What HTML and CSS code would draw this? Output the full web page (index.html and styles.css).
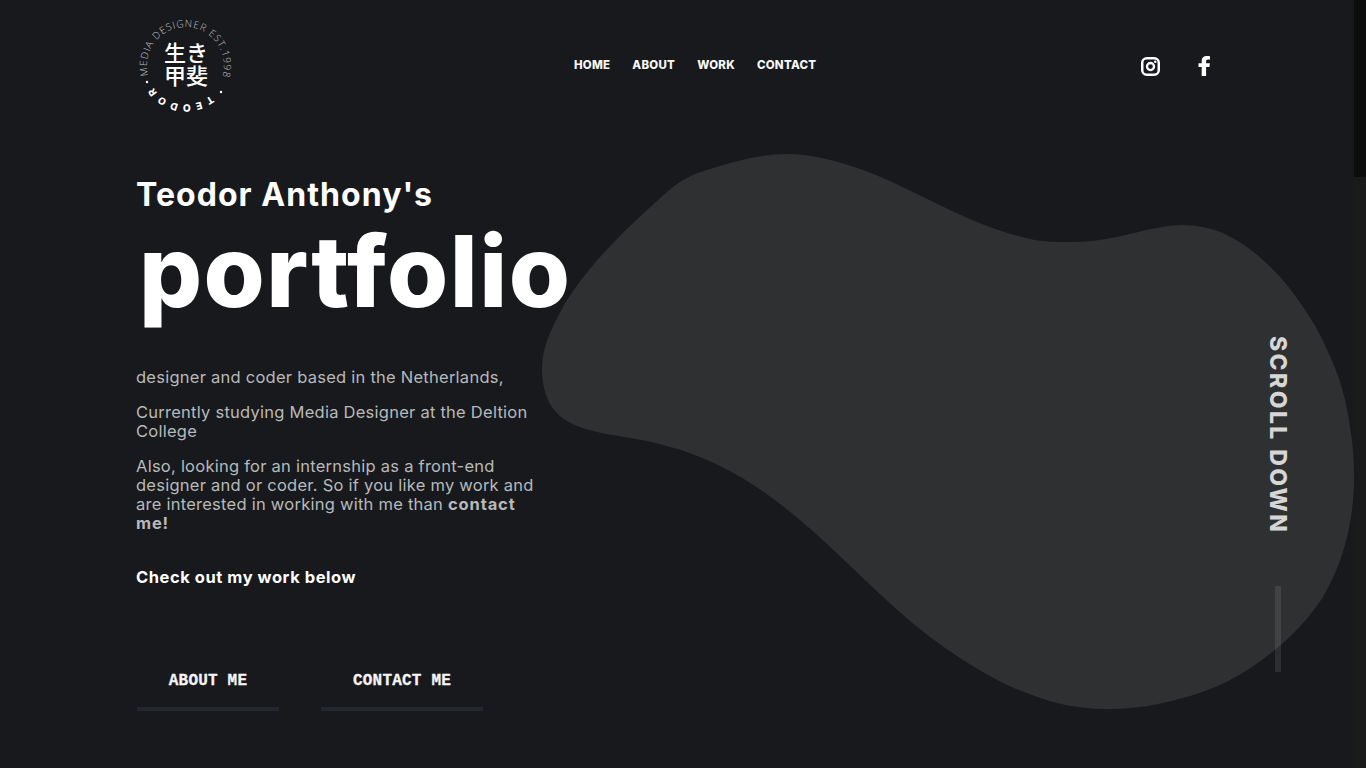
FILE: index.html
```html
<!DOCTYPE html>
<html lang="en">
<head>
<meta charset="utf-8">
<title>Teodor Anthony's portfolio</title>
<link rel="stylesheet" href="styles.css">
</head>
<body>
<div class="page">
  <svg class="blob" viewBox="0 0 1354 768" width="1354" height="768" aria-hidden="true">
    <path fill="#2f3032" d="M707 170C730 163 757 154 787 154C812 154 838 161 863 170C893 181 922 197 950 210C975 222 1003 233 1030 239C1043 242 1057 242 1070 242C1087 242 1102 240 1117 237C1131 234 1144 230 1157 228C1166 226 1175 225 1183 225C1198 225 1210 228 1223 233C1238 240 1251 249 1263 260C1279 274 1292 290 1303 307C1316 325 1325 344 1333 363C1342 384 1347 405 1350 427C1353 444 1354 460 1354 477C1354 497 1352 517 1347 537C1342 558 1334 578 1323 597C1312 614 1298 630 1283 643C1267 657 1249 670 1230 680C1209 691 1186 698 1163 703C1145 707 1126 709 1107 709C1090 709 1073 707 1057 703C1038 698 1020 691 1003 683C989 676 976 668 963 660C952 653 941 645 930 637C885 603 845 558 800 520C770 495 740 474 707 460C695 455 683 450 670 447C657 443 644 440 630 438C613 435 596 433 580 427C565 422 553 412 548 400C544 391 542 381 542 370C542 345 553 326 564 305C590 262 630 225 668 191C680 181 692 174 707 170Z"/>
  </svg>
  <div class="rail">
    <span class="scroll-label">SCROLL DOWN</span>
    <span class="scroll-line"></span>
  </div>
  <main class="content">
    <header class="top">
      <svg class="logo" viewBox="0 0 100 100" width="100" height="100" aria-label="Logo">
        <defs>
          <path id="arcTop" d="M12.300 60.500A38.500 38.500 0 1 1 86.700 60.500"/>
          <path id="arcBottom" d="M81.400 72.900A39 39 0 0 1 12.900 63.800"/>
        </defs>
        <text class="logo-top"><textPath href="#arcTop">MEDIA DESIGNER EST.1998</textPath></text>
        <text class="logo-bottom"><textPath href="#arcBottom" startOffset="10">TEODOR</textPath></text>
        <circle cx="11" cy="67" r="1.200" fill="#fff"/>
        <circle cx="85" cy="77" r="1.200" fill="#fff"/>
        <text class="logo-cjk" x="50" y="46" text-anchor="middle">生き</text>
        <text class="logo-cjk" x="50" y="69" text-anchor="middle">甲斐</text>
      </svg>
      <nav class="nav">
        <a>HOME</a><a>ABOUT</a><a>WORK</a><a>CONTACT</a>
      </nav>
      <div class="social">
        <svg viewBox="0 0 20 20" width="19" height="19" aria-label="Instagram">
          <rect x="1.300" y="1.300" width="17.400" height="17.400" rx="4.800" fill="none" stroke="#fff" stroke-width="2.600"/>
          <circle cx="10" cy="10" r="3.700" fill="none" stroke="#fff" stroke-width="2.400"/>
          <circle cx="15" cy="5" r="1.300" fill="#fff"/>
        </svg>
        <svg viewBox="0 0 13 20" width="13" height="20" aria-label="Facebook">
          <path fill="#fff" d="M3.700 20V11H.5V7.200H3.700V4.800C3.700 1.700 5.700 0 8.600 0c1.400 0 2.700.1 3.400.2v3.300h-2c-1.500 0-1.900.8-1.900 1.900v1.800h3.800L11.400 11H8.100v9Z"/>
        </svg>
      </div>
    </header>
    <h2 class="sub">Teodor Anthony's</h2>
    <h1 class="title">portfolio</h1>
    <section class="intro">
      <p>designer and coder based in the Netherlands,</p>
      <p>Currently studying Media Designer at the Deltion College</p>
      <p>Also, looking for an internship as a front-end designer and or coder. So if you like my work and are interested in working with me than <b>contact me!</b></p>
    </section>
    <p class="check">Check out my work below</p>
    <div class="buttons">
      <a class="btn btn-about">ABOUT ME</a>
      <a class="btn btn-contact">CONTACT ME</a>
    </div>
  </main>
</div>
<div class="scrollbar"><div class="thumb"></div></div>
</body>
</html>
```
FILE: styles.css
```css
* { box-sizing: border-box; margin: 0; padding: 0; }
html, body { height: 768px; overflow: hidden; }
body {
  display: flex;
  background: #17191d;
  color: #fff;
  font-family: "Inter", "Noto Sans CJK JP", sans-serif;
}
.page { position: relative; flex: 1; height: 768px; }
.blob { position: absolute; left: 0; top: 0; }
.content { position: relative; padding: 0 0 0 136px; width: 1216px; }
.top {
  display: flex;
  align-items: flex-start;
  height: 176px;
  padding-top: 15px;
}
.logo { width: 100px; height: 100px; flex: none; overflow: visible; }
.logo-top { font-size: 10px; font-weight: 300; fill: #c4c5c6; letter-spacing: .85px; font-family: "Open Sans", sans-serif; }
.logo-bottom { font-size: 10px; font-weight: 800; fill: #fff; letter-spacing: 4.500px; font-family: "Inter", sans-serif; }
.logo-cjk { font-size: 22px; font-weight: 500; fill: #fff; font-family: "Noto Sans CJK JP", sans-serif; }
.nav {
  display: flex;
  gap: 22px;
  margin-left: 338px;
  margin-top: 42px;
  font-size: 11.500px;
  font-weight: 800;
  letter-spacing: .25px;
  line-height: 16px;
  color: #f6f6f6;
}
.social {
  display: flex;
  align-items: center;
  gap: 38px;
  margin-left: auto;
  margin-right: 5px;
  margin-top: 41px;
}
.sub { font-size: 32px; font-weight: 700; line-height: 38px; letter-spacing: 1.050px; }
.title {
  font-size: 99px;
  font-weight: 800;
  line-height: 106px;
  margin-top: 4px;
  margin-left: 3px;
  letter-spacing: 1.400px;
}
.intro {
  width: 400px;
  margin-top: 44px;
  font-size: 16.500px;
  line-height: 19px;
  letter-spacing: .25px;
  color: #b8b9ba;
}
.intro b { letter-spacing: .85px; }
.intro p + p { margin-top: 16px; }
.check { margin-top: 35px; font-size: 16.500px; font-weight: 700; line-height: 19px; letter-spacing: .55px; color: #fff; }
.buttons { display: flex; gap: 42px; margin-top: 75px; margin-left: 1px; }
.btn {
  display: block;
  height: 49px;
  padding-top: 10px;
  text-align: center;
  border-bottom: 4px solid #24272d;
  font-family: "Liberation Mono", monospace;
  font-weight: 700;
  font-size: 16px;
  line-height: 18px;
  letter-spacing: .2px;
  -webkit-text-stroke: .3px #f4f4f4;
  color: #f4f4f4;
}
.btn-about { width: 142px; }
.btn-contact { width: 162px; }
.rail {
  position: absolute;
  left: 1267px;
  top: 336px;
  width: 22px;
  display: flex;
  flex-direction: column;
  align-items: center;
  gap: 54px;
}
.scroll-label {
  writing-mode: vertical-rl;
  font-size: 23px;
  font-weight: 800;
  letter-spacing: 2.400px;
  line-height: 22px;
  height: 196px;
  white-space: nowrap;
  color: #d6d6d6;
}
.scroll-line { width: 6px; height: 86px; background: rgba(255, 255, 255, .09); }
.scrollbar { width: 12px; height: 768px; background: #1a1a1b; flex: none; }
.thumb { height: 177px; background: #0c0c0d; }
```
